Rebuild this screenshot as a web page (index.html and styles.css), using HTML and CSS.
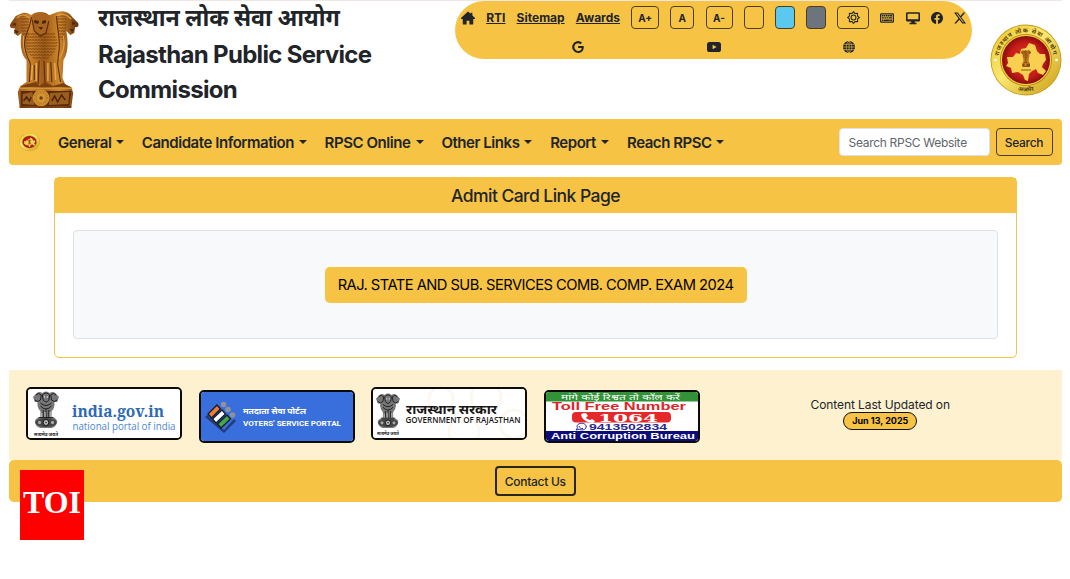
FILE: index.html
```html
<!DOCTYPE html>
<html lang="en">
<head>
  <meta charset="UTF-8">
  <meta name="viewport" content="width=device-width, initial-scale=1.0">
  <title>Rajasthan Public Service Commission</title>
  <link rel="stylesheet" href="styles.css">
</head>
<body>
  <!-- shared drawings -->
  <svg class="defs" width="0" height="0">
    <defs>
      <linearGradient id="gold" x1="0" x2="1">
        <stop offset="0" stop-color="#7d4210"/>
        <stop offset=".3" stop-color="#c9802a"/>
        <stop offset=".5" stop-color="#9c5a17"/>
        <stop offset=".72" stop-color="#cf882b"/>
        <stop offset="1" stop-color="#5f300c"/>
      </linearGradient>
      <linearGradient id="rim" x1="0" y1="0" x2="1" y2="1">
        <stop offset="0" stop-color="#e9c52e"/>
        <stop offset=".45" stop-color="#fbe870"/>
        <stop offset="1" stop-color="#c99b14"/>
      </linearGradient>
      <radialGradient id="red">
        <stop offset="0" stop-color="#e23a22"/>
        <stop offset=".7" stop-color="#c51d17"/>
        <stop offset="1" stop-color="#8c0d10"/>
      </radialGradient>
      <pattern id="mane" width="3" height="3" patternUnits="userSpaceOnUse">
        <path d="M0 0l1.500 2l1.500-2" fill="none" stroke="#713c0d" stroke-width=".7"/>
      </pattern>
      <symbol id="lions" viewBox="8 11 73 98" preserveAspectRatio="none">
        <path fill="url(#gold)" d="M22 13C27 12 29 15 31 15C34 11 46 11 49 15C52 15 53 13 58 12C64 10 70 12 73 17L79 23C80 26 79 28 76 27L75 33L71 35L67 31C69 42 69 53 64 60L63 78L66 85L72 87L74 93L72 108L19 108L17 92L20 86L26 82L26 60C20 54 19 43 21 33L17 36L13 33L14 28C9 29 8 26 10 23L15 16Z"/>
        <path fill="url(#mane)" d="M27 33H55L58 42C57 52 50 60 41 61C31 60 25 52 25 42Z"/>
        <path fill="url(#mane)" d="M20 16L29 17L27 36L22 38L20 27ZM57 16L68 15L67 26L65 42L59 38Z"/>
        <path fill="none" stroke="#e0a040" stroke-width="1.200" d="M16 18C20 14 25 14 29 18M57 16C61 13 67 14 72 19M23 36C22 46 24 54 29 59M64 36C66 46 63 54 59 59"/>
        <path fill="#a96520" d="M31 17C34 12 47 12 49 18L48 27C46 33 43 35 40 34C35 33 33 30 32 25Z"/>
        <path fill="#4f2608" d="M34 20l5 1-1 3-4-1zM42 21l4-1v3l-4 1zM38 27l5 0-2 3zM11 24l4-1v3zM73 21l4 3-4 1zM13 30l5 1-2 3zM70 29l5 0-2 3z"/>
        <path fill="none" stroke="#5b2c09" stroke-width="1.100" d="M31 17C30 28 24 34 24 44C24 53 28 58 30 64L29 82M57 16C57 30 62 40 59 54L58 64L61 82M39 61L38 84M44 61L45 84M34 65L34 80M51 62L52 82M32 20L34 31L40 36L46 33L49 21"/>
        <path fill="none" stroke="#e6ab4b" stroke-width="1.500" d="M32 65L31 80M36 63L36 81M48 63L48 81M55 63L56 80"/>
        <path fill="#7a4110" d="M27 84L36 82L39 86L45 82L53 86L64 83L71 87H19Z"/>
        <path fill="#592a0b" d="M20 91H72L70 106H20Z"/>
        <path fill="#9c5e1d" d="M22 94L32 92L34 105L22 104ZM50 93L70 92L69 104L49 105Z"/>
        <path fill="none" stroke="#4a220a" stroke-width="1.500" d="M23 101l3-4 3 4 2-4M52 101l3-5 3 6 4-7 4 5"/>
        <circle cx="41" cy="98" r="8.500" fill="#d4952f"/>
        <circle cx="41" cy="98" r="6" fill="none" stroke="#b4772a" stroke-width="3" stroke-dasharray="1 1"/>
        <circle cx="41" cy="98" r="1.700" fill="#6c390c"/>
        <path fill="none" stroke="#d3913a" stroke-width="1.500" d="M18 88.500H73"/>
        <path fill="none" stroke="#673209" stroke-width="1.500" d="M19 107H72"/>
      </symbol>
      <!-- line version used on the small logos -->
      <symbol id="lions-ink" viewBox="0 0 28 38" preserveAspectRatio="none">
        <path fill="#777" d="M4 2Q7 0 10 2Q14-1 18 2Q21 0 24 2L28 6L26 11L23 11Q24 17 20 20L20 26Q26 27 26 31Q25 36 20 37H8Q3 36 2 31Q2 27 8 26L8 20Q4 17 5 11L2 11L0 6Z"/>
        <path fill="none" stroke="#1c1c1c" stroke-width="1" d="M3 4Q6 1 9 4L8 9Q5 12 2 9M25 4Q22 1 19 4L20 9Q23 12 26 9M10 4Q14 0 18 4L17 9Q14 13 11 9ZM8 12Q14 17 20 12M8 15Q14 21 20 15M11 19V26M14 18V26M17 19V26M6 26.500H22"/>
        <path fill="#ccc" d="M12 5h1v2h-1zM15 5h1v2h-1zM9 22h1v4H9zM12.500 21h1v5h-1zM18 21h1v5h-1z"/>
        <ellipse cx="14" cy="31.500" rx="11.500" ry="4.500" fill="#444"/>
        <circle cx="14" cy="31.500" r="3" fill="#bbb" stroke="#111" stroke-width="1"/>
        <circle cx="14" cy="31.500" r=".8" fill="#111"/>
        <circle cx="7" cy="31.500" r="1.700" fill="#aaa"/>
        <circle cx="21" cy="31.500" r="1.700" fill="#aaa"/>
      </symbol>
      <symbol id="seal" viewBox="0 0 72 72" preserveAspectRatio="none">
        <circle cx="36" cy="36" r="35.500" fill="#c69a17"/>
        <circle cx="36" cy="36" r="34.600" fill="url(#rim)"/>
        <circle cx="36" cy="36" r="26" fill="#b3860e"/>
        <circle cx="36" cy="36" r="25.200" fill="#efcf3f"/>
        <circle cx="36" cy="36" r="24" fill="url(#red)"/>
        <path fill="#f8cf4f" d="M17 33l6 0 3-4 4 1 1-5 5-1 3-5 6 2 2 6 3 3 5 0 1 6-3 4-1 3 4 4-3 4-5-2-2-4-4 2-3 3-1 7-3-1-2-5-5-3-6 1-1-5-5-2 2-3z"/>
        <use href="#lions" x="31" y="26" width="10" height="17"/>
        <path d="M31 46h10" stroke="#8b5a16"/>
      </symbol>
      <path id="arc-top" d="M8.500 36a27.500 27.500 0 0 1 55 0"/>
      <path id="arc-bottom" d="M4.500 36a31.500 31.500 0 0 0 63 0"/>
    </defs>
  </svg>

  <header class="top">
    <svg class="emblem" viewBox="0 0 71 98"><use href="#lions" width="71" height="98"/></svg>
    <h1 class="title">
      <span class="hindi">राजस्थान लोक सेवा आयोग</span>
      <span>Rajasthan Public Service</span>
      <span>Commission</span>
    </h1>
    <div class="tools">
      <div class="tools-row">
        <svg class="ico home" viewBox="0 0 16 16"><path d="M8.700 1a1 1 0 0 0-1.400 0L.3 7.800a.6.6 0 0 0 .4 1.200H2v5.500a1 1 0 0 0 1 1h3.400V11h3.200v4.500H13a1 1 0 0 0 1-1V9h1.300a.6.6 0 0 0 .4-1.200L13 5.200V2h-2v1.200z"/></svg>
        <a href="#">RTI</a>
        <a href="#">Sitemap</a>
        <a href="#">Awards</a>
        <button class="size plus">A+</button>
        <button class="size normal">A</button>
        <button class="size minus">A-</button>
        <button class="swatch"></button>
        <button class="swatch blue"></button>
        <button class="swatch gray"></button>
        <button class="size gear">
          <svg class="ico" viewBox="0 0 16 16"><g fill="none" stroke="#212529" stroke-width="1.300"><circle cx="8" cy="8" r="3"/><path stroke-linejoin="round" d="M8 .8L9.600 3 12.900 2.900 13 6.300 15.200 8 13 9.700 13.100 13.100 9.700 13 8 15.200 6.300 13 2.900 13.100 3 9.700 .8 8 3 6.300 2.900 2.900 6.300 3z"/></g></svg>
        </button>
        <svg class="ico" viewBox="0 0 16 16"><path fill-rule="evenodd" d="M1.500 2.500h13A1.500 1.500 0 0 1 16 4v8a1.500 1.500 0 0 1-1.500 1.500h-13A1.500 1.500 0 0 1 0 12V4a1.500 1.500 0 0 1 1.500-1.500zM1.400 3.900v8.200h13.200V3.900z"/><path d="M2 4.500h1.900v1.700H2zM4.400 4.500h1.900v1.700H4.400zM6.800 4.500h1.900v1.700H6.800zM9.200 4.500h1.900v1.700H9.200zM11.600 4.500h2.300v1.700h-2.300zM2.200 7h2.500v1.700H2.200zM5.200 7h1.900v1.700H5.200zM7.600 7h1.900v1.700H7.600zM10 7h3.900v1.700H10zM2.200 9.600h1.700v1.800H2.200zM4.400 9.600h6.700v1.800H4.400zM11.600 9.600h2.300v1.800h-2.300z"/></svg>
        <svg class="ico" viewBox="0 0 16 16"><path fill-rule="evenodd" d="M1.500 1.500h13A1.500 1.500 0 0 1 16 3v7.500a1.500 1.500 0 0 1-1.500 1.500H10v1.500h2V15H4v-1.500h2V12H1.500A1.500 1.500 0 0 1 0 10.500V3a1.500 1.500 0 0 1 1.500-1.500zM1.800 3.200v6.300h12.400V3.200z"/></svg>
        <svg class="ico fb" viewBox="0 0 16 16"><path d="M16 8.050C16 3.600 12.420 0 8 0S0 3.600 0 8.050c0 4.020 2.930 7.350 6.750 7.950v-5.620H4.720V8.050h2.030V6.280c0-2.020 1.200-3.130 3.020-3.130.88 0 1.790.16 1.790.16v1.980h-1c-.99 0-1.300.62-1.300 1.260v1.500h2.210l-.35 2.330H9.250V16C13.070 15.400 16 12.070 16 8.050"/></svg>
        <svg class="ico x" viewBox="0 0 16 16"><path fill-rule="evenodd" d="M12.600.750h2.450l-5.360 6.140L16 15.250h-4.940L7.200 10.190 2.770 15.250H.32l5.730-6.570L0 .750h5.060l3.500 4.620zM11.740 13.780h1.360L4.320 2.140H2.870z"/></svg>
      </div>
      <div class="tools-row second">
        <svg class="ico fb" viewBox="0 0 16 16"><path d="M15.550 6.560a9.400 9.400 0 0 1 .14 1.630c0 4.490-3 7.680-7.530 7.680a7.870 7.870 0 1 1 5.260-13.680L11.200 4.350c-2.800-2.700-8.100-.7-8.100 3.650 0 4.900 6.100 7.200 9.200 3.200.4-.6.600-1.200.7-1.800H8.160V6.560z"/></svg>
        <svg class="ico" viewBox="0 0 16 16"><path fill-rule="evenodd" d="M3 2.200h10a3 3 0 0 1 3 3v5.600a3 3 0 0 1-3 3H3a3 3 0 0 1-3-3V5.200a3 3 0 0 1 3-3zM6.400 5.300v5.400L11 8z"/></svg>
        <svg class="ico fb" viewBox="0 0 16 16"><circle cx="8" cy="8" r="8"/><path fill="none" stroke="#f6c344" stroke-width=".8" d="M8 0v16M0 8h16M1 4.500h14M1 11.500h14M8 0C3 4 3 12 8 16M8 0c5 4 5 12 0 16"/></svg>
      </div>
    </div>
    <svg class="seal" viewBox="0 0 72 72">
      <use href="#seal" width="72" height="72"/>
      <text class="seal-text"><textPath href="#arc-top" startOffset="4" textLength="77">राजस्थान लोक सेवा आयोग</textPath></text>
      <text class="seal-text" text-anchor="middle"><textPath href="#arc-bottom" startOffset="50%">अजमेर</textPath></text>
      <circle cx="5.500" cy="36" r="1.300" fill="#fff"/>
      <circle cx="66.500" cy="36" r="1.300" fill="#fff"/>
    </svg>
  </header>

  <nav class="navbar">
    <svg class="nav-logo" viewBox="0 0 21 18"><use href="#seal" width="21" height="18"/></svg>
    <a class="w1" href="#">General</a>
    <a class="w2" href="#">Candidate Information</a>
    <a class="w3" href="#">RPSC Online</a>
    <a class="w4" href="#">Other Links</a>
    <a class="w5" href="#">Report</a>
    <a class="w6" href="#">Reach RPSC</a>
    <form class="search">
      <input type="text" placeholder="Search RPSC Website">
      <button type="button">Search</button>
    </form>
  </nav>

  <main class="card">
    <h2>Admit Card Link Page</h2>
    <div class="card-body">
      <div class="well">
        <a class="exam" href="#">RAJ. STATE AND SUB. SERVICES COMB. COMP. EXAM 2024</a>
      </div>
    </div>
  </main>

  <section class="links">
    <svg class="badge" viewBox="2 2 152 49">
      <rect width="156" height="53" fill="#fff"/>
      <use href="#lions-ink" x="7" y="4" width="26" height="38"/>
      <text x="8" y="49" class="motto" textLength="24" lengthAdjust="spacingAndGlyphs">सत्यमेव जयते</text>
      <text x="46" y="30" class="india" textLength="92" lengthAdjust="spacingAndGlyphs">india.gov.in</text>
      <text x="46.500" y="42.500" class="portal" textLength="103" lengthAdjust="spacingAndGlyphs">national portal of india</text>
    </svg>
    <svg class="badge low" viewBox="2 2 152 49">
      <rect width="156" height="53" fill="#386fdd"/>
      <path fill="#263b78" d="M6 27l2-2 17 15 10-11 2 2-12 12z"/>
      <g fill="#8f9298"><circle cx="24.500" cy="14.500" r="2.800"/><circle cx="29" cy="19.500" r="2.800"/><circle cx="33.500" cy="25" r="2.800"/></g>
      <g stroke="#101a2c" stroke-width="1.300"><path fill="#ef7c32" d="M9 24l9-9 3.500 4-9 9z"/><path fill="#fff" d="M13.500 29l9.500-9 3.500 4-9.500 9z"/><path fill="#43a947" d="M18.500 34l9.500-9 3.500 4-9.500 9z"/></g>
      <text x="44" y="24" class="voter-hi" textLength="63" lengthAdjust="spacingAndGlyphs">मतदाता सेवा पोर्टल</text>
      <text x="44" y="36" class="voter" textLength="98" lengthAdjust="spacingAndGlyphs">VOTERS' SERVICE PORTAL</text>
    </svg>
    <svg class="badge" viewBox="2 2 152 49">
      <rect width="156" height="53" fill="#fff"/>
      <g fill="none" stroke="#fbf8f2" stroke-width="3"><circle cx="70" cy="12" r="12"/><circle cx="115" cy="10" r="15"/><circle cx="93" cy="45" r="15"/><circle cx="143" cy="37" r="14"/></g>
      <use href="#lions-ink" x="5" y="6" width="24" height="36"/>
      <text x="6" y="47.500" class="motto" textLength="22" lengthAdjust="spacingAndGlyphs">सत्यमेव जयते</text>
      <text x="35" y="27" class="raj-hi" textLength="91" lengthAdjust="spacingAndGlyphs">राजस्थान सरकार</text>
      <text x="34.500" y="36" class="raj" textLength="115" lengthAdjust="spacingAndGlyphs">GOVERNMENT OF RAJASTHAN</text>
    </svg>
    <svg class="badge low" viewBox="2 2 152 49">
      <rect width="156" height="53" fill="#fff"/>
      <rect width="156" height="11.500" fill="#329238"/>
      <rect y="41" width="156" height="12" fill="#0c0d78"/>
      <text x="17" y="9.700" class="bribe" textLength="119" lengthAdjust="spacingAndGlyphs">मांगे कोई रिश्वत तो कॉल करें</text>
      <text x="8" y="20" class="toll" textLength="134" lengthAdjust="spacingAndGlyphs">Toll Free Number</text>
      <rect x="28" y="22" width="99" height="10.500" rx="4" fill="#e5282a"/>
      <path fill="#fff" d="M38 23.500l4-.5 2 3-2 1.500c1 1.500 2 2 4 2.500l2-1 3 2c-1 2-3 2-5 1.600-5-1-8-4-9-7.500z"/>
      <text x="54" y="31.700" class="helpline" textLength="60" lengthAdjust="spacingAndGlyphs">1064</text>
      <path fill="#fff" stroke="#282a8b" stroke-width="1" d="M32 40l1.500-2.200c-3-5 9-6.500 8.700-.8-.3 3.200-5 3.400-7 2.200zM35 36c.5 2 2 2.700 4 2.500"/>
      <text x="45" y="40" class="phone" textLength="78" lengthAdjust="spacingAndGlyphs">9413502834</text>
      <text x="7" y="49" class="bureau" textLength="144" lengthAdjust="spacingAndGlyphs">Anti Corruption Bureau</text>
    </svg>
    <div class="updated">
      <div>Content Last Updated on</div>
      <span class="date">Jun 13, 2025</span>
    </div>
  </section>

  <footer class="bottom">
    <button>Contact Us</button>
  </footer>

  <div class="toi"><span>TOI</span></div>
</body>
</html>
```
FILE: styles.css
```css
* {
  box-sizing: border-box;
}

body {
  margin: 0 8.500px 0 9px;
  background-color: #fff;
  color: #212529;
  font-family: Inter, "Noto Sans Devanagari", "Noto Sans", sans-serif;
  font-size: 12px;
  overflow: hidden;
}

a {
  color: #212529;
  text-decoration: none;
}

button {
  font-family: inherit;
  color: #212529;
  background-color: transparent;
  border: 1px solid #4a4020;
  border-radius: 4px;
  padding: 0;
}

.defs {
  position: absolute;
}

/* header */
.top {
  display: flex;
  align-items: flex-start;
  height: 119px;
  border-top: 1px solid #eee7e3;
}

.emblem {
  width: 71px;
  height: 98px;
  margin-top: 10px;
  flex: none;
}

.title {
  width: 357px;
  margin: 0 0 0 18px;
  font-size: 24px;
  line-height: 35.500px;
  font-weight: 700;
  letter-spacing: -0.68px;
  flex: none;
}

.title span {
  display: block;
  white-space: nowrap;
}

.title .hindi {
  letter-spacing: 0;
  font-size: 23.200px;
}

.tools {
  width: 517px;
  height: 58px;
  background-color: #f6c344;
  border-radius: 29px;
  padding: 5px 6px 0 6px;
  flex: none;
}

.tools-row {
  display: flex;
  align-items: center;
  justify-content: space-between;
  height: 23px;
}

.tools-row a {
  font-weight: 700;
  text-decoration: underline;
  white-space: nowrap;
}

.tools-row.second {
  justify-content: center;
  gap: 122.500px;
  height: 14px;
  margin-top: 11px;
}

.ico {
  width: 14px;
  height: 14px;
  fill: #212529;
  flex: none;
}

.ico.fb,
.ico.x {
  width: 12px;
  height: 12px;
}

.size {
  height: 23px;
  font-size: 10px;
  font-weight: 700;
}

.plus { width: 28px; }
.normal { width: 24px; }
.minus { width: 27px; }

.size.gear {
  display: flex;
  align-items: center;
  justify-content: center;
  width: 32px;
}

.gear .ico {
  width: 13px;
  height: 13px;
}

.swatch {
  width: 20px;
  height: 23px;
}

.swatch.blue { background-color: #5bc8ef; }
.swatch.gray { background-color: #6c757d; }

.seal {
  width: 72px;
  height: 72px;
  margin: 23px 0 0 18px;
  flex: none;
}

.seal-text {
  font-size: 6px;
  font-weight: 700;
  fill: #5b4608;
}

/* navigation */
.navbar {
  display: flex;
  align-items: center;
  height: 46px;
  padding: 0 9px 0 10px;
  background-color: #f6c344;
  border-radius: 4px;
}

.nav-logo {
  width: 21px;
  height: 18px;
  margin-right: 18px;
}

.navbar a {
  display: flex;
  align-items: center;
  justify-content: space-between;
  margin-right: 17.800px;
  font-size: 15px;
  font-weight: 600;
  letter-spacing: -0.45px;
  white-space: nowrap;
}

.navbar a::after {
  content: "";
  border: 4.500px solid transparent;
  border-top-color: #212529;
  border-bottom: 0;
}

.w1 { width: 66px; }
.w2 { width: 165px; }
.w3 { width: 99px; }
.w4 { width: 91px; }
.w5 { width: 59px; }
.w6 { width: 97px; }

.search {
  display: flex;
  gap: 6px;
  margin-left: auto;
}

.search input {
  width: 151px;
  height: 28px;
  padding: 0 9px;
  border: 1px solid #dee2e6;
  border-radius: 4px;
  font-family: inherit;
  font-size: 12px;
  letter-spacing: -0.3px;
}

.search input::placeholder {
  color: #60656a;
}

.search button {
  width: 57px;
  height: 28px;
  font-size: 12px;
  font-weight: 500;
  letter-spacing: -0.3px;
}

/* admit card */
.card {
  width: 963px;
  height: 181px;
  margin: 12px auto 12px 45px;
  border: 1.500px solid #f6c344;
  border-radius: 5px;
}

.card h2 {
  margin: 0;
  height: 35px;
  line-height: 35px;
  background-color: #f6c344;
  font-size: 17.500px;
  font-weight: 500;
  letter-spacing: -0.55px;
  text-align: center;
}

.card-body {
  padding: 17px 18px 18px;
}

.well {
  display: flex;
  align-items: center;
  justify-content: center;
  height: 109px;
  background-color: #f8f9fa;
  border: 1px solid #dee2e6;
  border-radius: 4px;
}

.exam {
  width: 422px;
  height: 36px;
  line-height: 36px;
  background-color: #f6c344;
  border-radius: 5px;
  color: #000;
  font-size: 14.700px;
  letter-spacing: -0.53px;
  text-align: center;
  white-space: nowrap;
}

/* external links */
.links {
  display: flex;
  height: 90px;
  padding: 17px 17px 0;
  gap: 16.500px;
  background-color: #fdf1cf;
}

.badge {
  width: 156px;
  height: 53px;
  border: 2px solid #0b0b0b;
  border-radius: 5px;
  flex: none;
}

.badge.low {
  margin-top: 3px;
}

.motto { font-size: 4.500px; font-weight: 700; fill: #222; }
.india { font: 700 16.500px "Noto Serif", "Liberation Serif", serif; fill: #2d69b6; }
.portal { font: 10.500px "Open Sans", sans-serif; fill: #4b87d0; }
.voter-hi { font-size: 8px; font-weight: 700; fill: #fff; }
.voter { font: 700 8px Roboto, sans-serif; fill: #fff; }
.raj-hi { font-size: 13px; font-weight: 700; fill: #171717; }
.raj { font: 600 8px "Open Sans", sans-serif; fill: #171717; }
.bribe { font-size: 8px; fill: #fff; }
.toll { font: 700 10px "Liberation Sans", sans-serif; fill: #df2528; }
.helpline { font: 900 11.500px "DejaVu Serif", serif; fill: #fff; }
.phone { font: 700 9px "Liberation Sans", sans-serif; fill: #282a8b; }
.bureau { font: 700 9px "Liberation Sans", sans-serif; fill: #fff; }

.updated {
  width: 345px;
  margin-top: 10px;
  text-align: center;
  line-height: 15px;
  letter-spacing: -0.1px;
}

.date {
  display: inline-block;
  width: 74px;
  height: 18px;
  line-height: 15px;
  border: 1.500px solid #111;
  border-radius: 9px;
  background-color: #f6c344;
  color: #000;
  font-size: 9px;
  font-weight: 700;
  letter-spacing: 0;
}

/* footer */
.bottom {
  display: flex;
  justify-content: center;
  height: 42px;
  padding-top: 6px;
  background-color: #f6c344;
  border-radius: 5px;
}

.bottom button {
  width: 81px;
  height: 30px;
  border: 2px solid #2a2618;
  font-size: 12px;
  font-weight: 500;
  letter-spacing: -0.3px;
}

/* source mark laid over the page */
.toi {
  position: absolute;
  left: 20px;
  top: 470px;
  width: 64px;
  height: 70px;
  background-color: #fe0000;
  color: #fff;
  font: 700 32px/65px "Liberation Serif", serif;
  text-align: center;
}
```
